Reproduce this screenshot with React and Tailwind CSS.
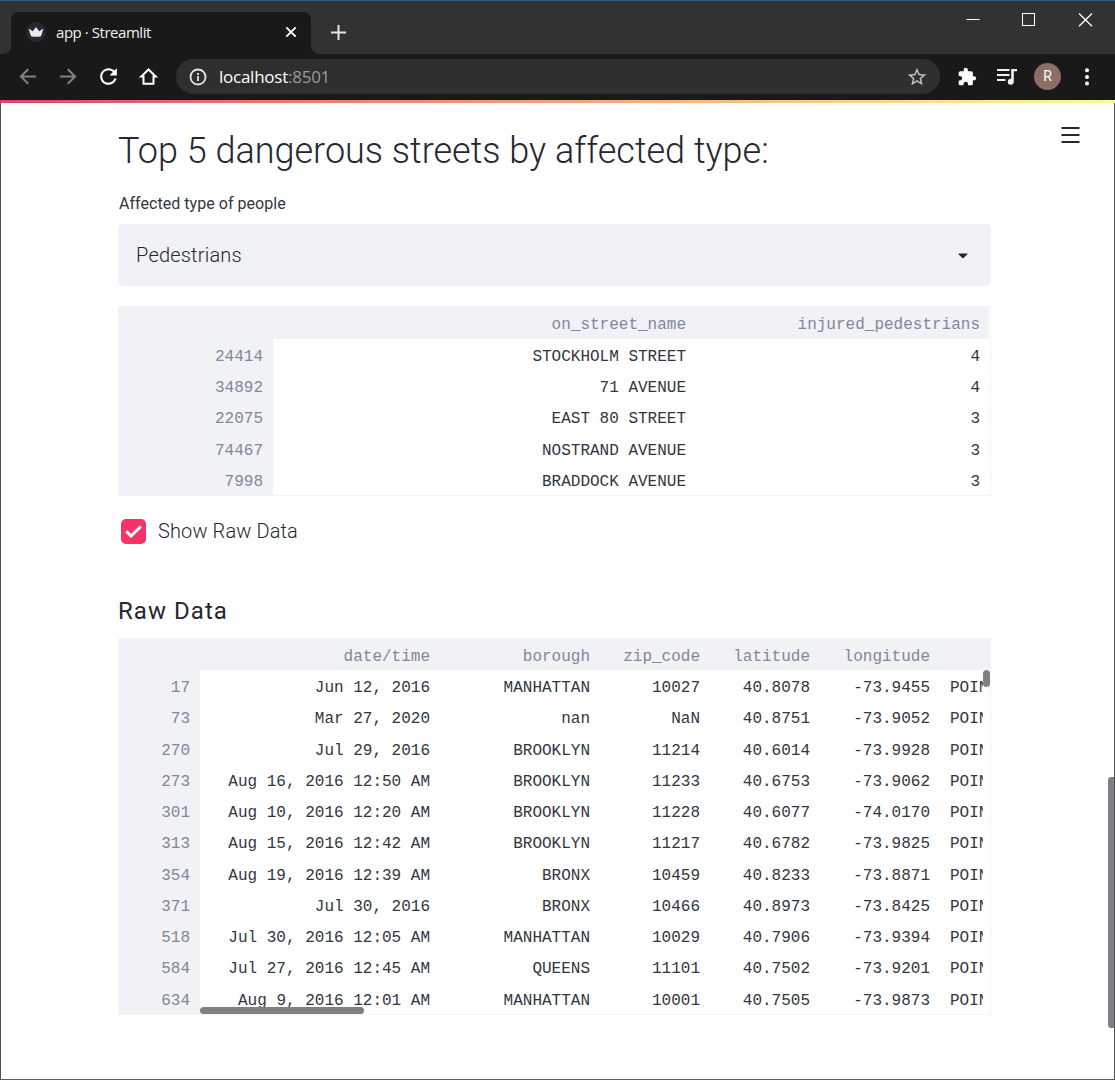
import React from "react";

const injured = [
  ["24414", "STOCKHOLM STREET", "4"],
  ["34892", "71 AVENUE", "4"],
  ["22075", "EAST 80 STREET", "3"],
  ["74467", "NOSTRAND AVENUE", "3"],
  ["7998", "BRADDOCK AVENUE", "3"],
];

const raw = [
  ["17", "Jun 12, 2016", "MANHATTAN", "10027", "40.8078", "-73.9455"],
  ["73", "Mar 27, 2020", "nan", "NaN", "40.8751", "-73.9052"],
  ["270", "Jul 29, 2016", "BROOKLYN", "11214", "40.6014", "-73.9928"],
  ["273", "Aug 16, 2016 12:50 AM", "BROOKLYN", "11233", "40.6753", "-73.9062"],
  ["301", "Aug 10, 2016 12:20 AM", "BROOKLYN", "11228", "40.6077", "-74.0170"],
  ["313", "Aug 15, 2016 12:42 AM", "BROOKLYN", "11217", "40.6782", "-73.9825"],
  ["354", "Aug 19, 2016 12:39 AM", "BRONX", "10459", "40.8233", "-73.8871"],
  ["371", "Jul 30, 2016", "BRONX", "10466", "40.8973", "-73.8425"],
  ["518", "Jul 30, 2016 12:05 AM", "MANHATTAN", "10029", "40.7906", "-73.9394"],
  ["584", "Jul 27, 2016 12:45 AM", "QUEENS", "11101", "40.7502", "-73.9201"],
  ["634", "Aug 9, 2016 12:01 AM", "MANHATTAN", "10001", "40.7505", "-73.9873"],
];

function TitleBar() {
  return (
    <div className="flex h-[54px] items-end border-t border-[#2f5f86] bg-[#323232] font-['Open_Sans','Noto_Sans',sans-serif]">
      <div className="flex h-[42px] w-[11px] items-end bg-[#191919]">
        <div className="h-full w-full rounded-br-[8px] bg-[#323232]" />
      </div>
      <div className="flex h-[42px] w-[300px] items-center rounded-t-[8px] bg-[#191919] pr-[14px] pb-[2px] pl-[15px]">
        <svg width="20" height="20" viewBox="0 0 20 20">
          <circle cx="10" cy="10" r="10" fill="#262730" />
          <path d="M2.6 6.6 L6.8 9.2 L10 5 L13.2 9.2 L17.4 6.6 L15 14.2 Q10 15.2 5 14.2 Z" fill="#e9e9ee" />
        </svg>
        <span className="ml-[10px] text-[15px] leading-5 tracking-[-0.45px] whitespace-nowrap text-[#f1f1f1]">app · Streamlit</span>
        <svg className="ml-auto" width="12" height="12" viewBox="0 0 12 12" stroke="#fff" strokeWidth="1.9">
          <path d="M1.3 1.3 L10.7 10.7 M10.7 1.3 L1.3 10.7" />
        </svg>
      </div>
      <div className="h-[42px] w-[11px] bg-[#191919]">
        <div className="h-full w-full rounded-bl-[8px] bg-[#323232]" />
      </div>
      <svg className="mb-[14px] ml-[9px]" width="15" height="15" viewBox="0 0 15 15" stroke="#e6e6e6" strokeWidth="2">
        <path d="M7.5 0 V15 M0 7.5 H15" />
      </svg>
      <div className="mr-[22px] mb-[27px] ml-auto flex items-center gap-[42px]">
        <svg width="14" height="14" viewBox="0 0 14 14" stroke="#fff"><path d="M0.5 6.5 H13.5" /></svg>
        <svg width="14" height="14" viewBox="0 0 14 14" fill="none" stroke="#fff"><rect x="0.5" y="0.5" width="12" height="12" /></svg>
        <svg width="15" height="14" viewBox="0 0 15 14" stroke="#fff" strokeWidth="1.3"><path d="M1 0.5 L14 13.3 M14 0.5 L1 13.3" /></svg>
      </div>
    </div>
  );
}

function Toolbar() {
  return (
    <div className="flex h-[46px] items-center bg-[#191919] pb-px pl-[16px]">
      <svg width="24" height="24" viewBox="0 0 24 24" fill="none" stroke="#828282" strokeWidth="2"><path d="M20 11.5 H5 M12.2 4.2 L4.9 11.5 L12.2 18.8" /></svg>
      <svg className="ml-[16px]" width="24" height="24" viewBox="0 0 24 24" fill="none" stroke="#828282" strokeWidth="2"><path d="M4 11.5 H19 M11.8 4.2 L19.1 11.5 L11.8 18.8" /></svg>
      <svg className="ml-[16px]" width="25" height="25" viewBox="0 0 24 24" fill="#fff"><path d="M17.65 6.35C16.2 4.9 14.21 4 12 4c-4.42 0-7.99 3.58-7.99 8s3.57 8 7.99 8c3.73 0 6.84-2.55 7.73-6h-2.08c-.82 2.33-3.04 4-5.65 4-3.31 0-6-2.69-6-6s2.69-6 6-6c1.66 0 3.14.69 4.22 1.78L13 11h7V4l-2.35 2.35z" /></svg>
      <svg className="ml-[15px]" width="24" height="24" viewBox="0 0 24 24" fill="none" stroke="#fff" strokeWidth="2"><path d="M12.5 4.5 L5.3 11.5 H7.5 V18.7 H17.5 V11.5 H19.7 Z" /></svg>
      <div className="ml-[16px] flex h-[35px] w-[764px] items-center rounded-full bg-[#2f2f2f] pr-[12px] pl-[13px]">
        <svg width="18" height="18" viewBox="0 0 18 18" fill="none" stroke="#e6e6e6" strokeWidth="1.8"><circle cx="9" cy="9" r="7.5" /><path d="M9 8 V13 M9 5 V6.9" /></svg>
        <span className="ml-[12px] font-['Open_Sans','Noto_Sans',sans-serif] text-[17px] leading-6 tracking-[-0.25px] text-white">localhost<span className="text-[#9a9a9a]">:8501</span></span>
        <svg className="ml-auto" width="22" height="22" viewBox="0 0 24 24" fill="#c4c4c4"><path d="M22 9.24l-7.19-.62L12 2 9.19 8.63 2 9.24l5.46 4.73L5.82 21 12 17.27 18.18 21l-1.63-7.03L22 9.24zM12 15.4l-3.76 2.27 1-4.28-3.32-2.88 4.38-.38L12 6.1l1.71 4.04 4.38.38-3.32 2.88 1 4.28L12 15.4z" /></svg>
      </div>
      <svg className="ml-[17px]" width="20" height="20" viewBox="0 0 24 24" fill="#fff"><path d="M20.5 11H19V7c0-1.1-.9-2-2-2h-4V3.5C13 2.12 11.88 1 10.5 1S8 2.12 8 3.5V5H4c-1.1 0-1.99.9-1.99 2v3.8H3.5c1.49 0 2.7 1.21 2.7 2.7s-1.21 2.7-2.7 2.7H2V20c0 1.1.9 2 2 2h3.8v-1.5c0-1.49 1.21-2.7 2.7-2.7 1.49 0 2.7 1.21 2.7 2.7V22H17c1.1 0 2-.9 2-2v-4h1.5c1.38 0 2.5-1.12 2.5-2.5S21.88 11 20.5 11z" /></svg>
      <svg className="ml-[20px]" width="20" height="16" viewBox="0 0 20 16" fill="#f0f0f0"><path d="M0 0H12.5V2H0Z M0 5H12.5V7H0Z M0 10H8.5V12H0Z M14.2 0H20V2.3H16.8V12.6A3 3 0 1 1 14.2 9.7Z" /></svg>
      <div className="ml-[17px] flex size-[27px] items-center justify-center rounded-full bg-[#8d6e63] font-[Roboto,sans-serif] text-[14px] text-white">R</div>
      <svg className="ml-[23px]" width="6" height="18" viewBox="0 0 6 18" fill="#fff"><circle cx="3" cy="2.3" r="2" /><circle cx="3" cy="8.9" r="2" /><circle cx="3" cy="15.5" r="2" /></svg>
    </div>
  );
}

function InjuredTable() {
  return (
    <div className="mt-[20px] h-[190px] overflow-hidden border border-[#f3f4f8] font-['Liberation_Mono',monospace] text-[16px] text-[#34353e]">
      <div className="mr-px grid h-[32px] grid-cols-[154px_423px_1fr] bg-[#f0f2f6] text-right leading-[36px] text-[#828799]">
        <span />
        <span className="pr-[10px]">on_street_name</span>
        <span className="pr-[9px]">injured_pedestrians</span>
      </div>
      {injured.map(([id, street, count]) => (
        <div key={id} className="grid h-[31.2px] grid-cols-[154px_423px_1fr] text-right leading-[36px]">
          <span className="bg-[#f0f2f6] pr-[10px] text-[#828799]">{id}</span>
          <span className="pr-[10px]">{street}</span>
          <span className="pr-[10px]">{count}</span>
        </div>
      ))}
    </div>
  );
}

function RawTable() {
  return (
    <div className="relative h-[377px] overflow-hidden border border-[#f3f4f8] font-['Liberation_Mono',monospace] text-[16px] text-[#34353e]">
      <div className="grid h-[31px] grid-cols-[81px_230px_160px_110px_110px_120px_1fr] bg-[#f0f2f6] text-right leading-[36px] text-[#828799]">
        <span />
        <span>date/time</span>
        <span>borough</span>
        <span>zip_code</span>
        <span>latitude</span>
        <span>longitude</span>
      </div>
      {raw.map(([id, date, borough, zip, lat, lon]) => (
        <div key={id} className="grid h-[31.25px] grid-cols-[81px_230px_160px_110px_110px_120px_33px] text-right leading-[36.5px] whitespace-nowrap">
          <span className="bg-[#f0f2f6] pr-[10px] text-[#828799]">{id}</span>
          <span>{date}</span>
          <span>{borough}</span>
          <span>{zip}</span>
          <span>{lat}</span>
          <span>{lon}</span>
          <span className="ml-[20px] w-[33px] overflow-hidden text-left">POINT</span>
        </div>
      ))}
      <div className="absolute top-[31px] right-0 h-[17px] w-[7px] rounded-full bg-[#808080]" />
      <div className="absolute right-0 bottom-0 left-[81px] h-[7px] bg-white">
        <div className="h-[7px] w-[164px] rounded-full bg-[#808080]" />
      </div>
    </div>
  );
}

export default function App() {
  return (
    <div className="relative flex h-[1080px] w-[1115px] flex-col overflow-hidden border-b border-[#5c5c5c] bg-white">
      <TitleBar />
      <Toolbar />
      <div className="h-[3px] shrink-0 bg-linear-to-r from-[#e2416a] via-[#f2a07c] to-[#fbfb90]" />
      <main className="relative flex-1 border-x border-[#4f4f55] px-[117px] font-[Roboto,sans-serif] text-[#262730]">
        <svg className="absolute top-[23px] right-[34px]" width="19" height="18" viewBox="0 0 19 18" stroke="#262730" strokeWidth="2"><path d="M0.5 2 H18.5 M0.5 9 H18.5 M0.5 16 H18.5" /></svg>
        <div className="w-[873px]">
          <h1 className="pt-[23px] text-[36px] leading-[50px] font-light whitespace-nowrap">Top 5 dangerous streets by affected type:</h1>
          <p className="mt-[17px] pl-px text-[16px] leading-[22px] font-normal tracking-[0.04px] whitespace-nowrap text-[#34353e]">Affected type of people</p>
          <div className="mt-[9px] flex h-[62px] items-center rounded-[5px] bg-[#f0f2f6] pr-[23px] pl-[18px]">
            <span className="text-[20px] font-light tracking-[0.2px]">Pedestrians</span>
            <svg className="mt-px ml-auto" width="10" height="6" viewBox="0 0 10 6" fill="#262730"><path d="M0.7 0.5 H9.3 Q9.8 1 9.2 1.6 L5.6 5 Q5 5.6 4.4 5 L0.8 1.6 Q0.2 1 0.7 0.5 Z" /></svg>
          </div>
          <InjuredTable />
          <div className="mt-[23px] flex h-[25px] items-center pl-[3px]">
            <div className="flex size-[25px] items-center justify-center rounded-[5px] bg-[#f63366]">
              <svg width="17" height="13" viewBox="0 0 17 13" fill="none" stroke="#fff" strokeWidth="3"><path d="M1.2 6.3 L6 11 L15.8 1.5" /></svg>
            </div>
            <span className="ml-[12px] pb-[2px] text-[20px] font-light tracking-[0.12px] whitespace-nowrap">Show Raw Data</span>
          </div>
          <h3 className="mt-[52px] mb-[11px] text-[24px] leading-[31px] font-[450] tracking-[1.05px] whitespace-nowrap">Raw Data</h3>
          <RawTable />
        </div>
        <div className="absolute top-[674px] right-0 h-[251px] w-[6px] rounded-l-[3px] bg-[#808080]" />
      </main>
    </div>
  );
}
